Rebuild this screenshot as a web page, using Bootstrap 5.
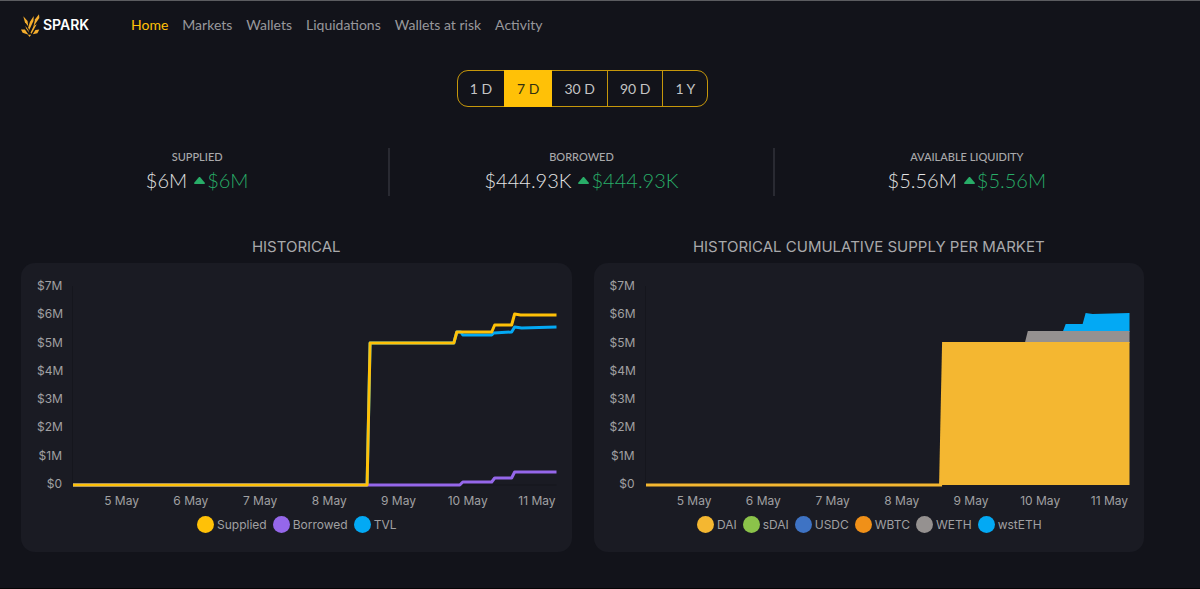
<!DOCTYPE html>
<html lang="en">
<head>
<meta charset="utf-8">
<meta name="viewport" content="width=device-width, initial-scale=1">
<title>Spark</title>
<link href="https://cdn.jsdelivr.net/npm/bootstrap@5.3.0/dist/css/bootstrap.min.css" rel="stylesheet">
<style>
  body { background: #12131a; color: #a9a9ab; font-family: Lato, sans-serif; font-size: 14px; line-height: 20px; }
  .page { border-top: 1px solid #5b5c60; border-bottom: 1px solid #050506; padding: 0 56px 0 21px; }
  .topbar { height: 48px; }
  .navbar-brand { width: 110px; margin: 0; padding: 0; color: #fff; font: 600 14px/20px Inter, sans-serif; gap: 3px; }
  .topbar .navbar-nav { gap: 14px; }
  .topbar .navbar-nav .nav-link { padding: 0; color: #98989c; }
  .topbar .navbar-nav .nav-link.active { color: #ffc107; }
  .periods { margin-top: 21px; }
  .periods .btn { --bs-btn-color: #c4c4c4; --bs-btn-border-color: #c6970b; --bs-btn-active-bg: #ffc107; --bs-btn-active-color: #33300f; --bs-btn-active-border-color: #ffc107; --bs-btn-padding-x: 12px; --bs-btn-padding-y: 7px; --bs-btn-font-size: 14px; --bs-btn-line-height: 21px; --bs-btn-border-radius: 11px; }
  .stats { --bs-gutter-x: 30px; margin-top: 41px; }
  .stat { height: 48px; }
  .stat:not(:last-child) { border-right: 2px solid #292a32; }
  .stat h2 { font-size: 11px; line-height: 18px; margin: 0; }
  .stat p { font-size: 20px; line-height: 28px; font-weight: 300; color: #e4e4e4; gap: 7px; margin: 0; }
  .stat .up { color: #28ad68; gap: 2px; }
  .charts { --bs-gutter-x: 22px; margin-top: 41px; }
  .charts h3 { font-size: 15px; line-height: 20px; font-weight: 400; margin: 0 0 6px; font-family: Inter, sans-serif; }
  .panel { background: #1a1b23; border-radius: 14px; padding: 16px 15px 19px 16px; font: 12px/14px Inter, sans-serif; color: #a0a0a2; }
  .y-axis { width: 25px; height: 212px; text-align: right; margin-right: 10px; }
  .plot { height: 198px; margin-top: 7px; border-left: 1px solid #15161d; min-width: 0; }
  .plot svg { width: 100%; height: 100%; overflow: visible; display: block; }
  .plot .series { fill: none; stroke-width: 3; stroke-linejoin: round; vector-effect: non-scaling-stroke; }
  .x-axis { margin: 3px -15px 0 50px; text-align: center; }
  .legend-row { margin: 8px 0 0; gap: 6px; padding: 0; list-style: none; }
  .legend-row li { gap: 3px; line-height: 17px; }
  .dot { width: 17px; height: 17px; }
  .foot-space { height: 36px; }
</style>
</head>
<body>
<div class="page min-vh-100">
  <nav class="topbar navbar navbar-expand p-0" aria-label="Main">
    <a class="navbar-brand d-flex align-items-center" href="#">
      <svg width="19" height="23" viewBox="62 36 58 70" aria-hidden="true">
        <g fill="#f5ae2d">
          <path d="M69 43 L82 57 L84 73 L74 61Z"/>
          <path d="M101 42 L100 57 L87 85 L84 77 L89 60Z"/>
          <path d="M117 37 L118 48 L100 74 L105 52Z"/>
          <path d="M101 72 L110 67 L94 96 L91 93Z"/>
          <path d="M62 83 L74 83 L85 99 L67 93Z"/>
          <path d="M75 72 L84 84 L87 93 L78 80Z"/>
          <path d="M118 83 L112 95 L98 98 L106 85Z"/>
          <path d="M83 99 L93 99 L88 106Z"/>
        </g>
      </svg>
      <span>SPARK</span>
    </a>
    <div class="navbar-nav">
      <a class="nav-link active" aria-current="page" href="#">Home</a>
      <a class="nav-link" href="#">Markets</a>
      <a class="nav-link" href="#">Wallets</a>
      <a class="nav-link" href="#">Liquidations</a>
      <a class="nav-link" href="#">Wallets at risk</a>
      <a class="nav-link" href="#">Activity</a>
    </div>
  </nav>

  <main>
    <div class="periods d-flex justify-content-center">
      <div class="btn-group" role="group" aria-label="Period">
        <button type="button" class="btn">1 D</button>
        <button type="button" class="btn active" aria-pressed="true">7 D</button>
        <button type="button" class="btn">30 D</button>
        <button type="button" class="btn">90 D</button>
        <button type="button" class="btn">1 Y</button>
      </div>
    </div>

    <section class="stats row text-center">
      <div class="stat col-4">
        <h2>SUPPLIED</h2>
        <p class="d-flex justify-content-center"><span>$6M</span><span class="up d-flex align-items-center"><svg width="11" height="7" viewBox="0 0 11 7" aria-hidden="true"><path fill="currentColor" d="M1 7 Q0 7 0 6 L5 0 H6 L11 6 Q11 7 10 7Z"/></svg>$6M</span></p>
      </div>
      <div class="stat col-4">
        <h2>BORROWED</h2>
        <p class="d-flex justify-content-center"><span>$444.93K</span><span class="up d-flex align-items-center"><svg width="11" height="7" viewBox="0 0 11 7" aria-hidden="true"><path fill="currentColor" d="M1 7 Q0 7 0 6 L5 0 H6 L11 6 Q11 7 10 7Z"/></svg>$444.93K</span></p>
      </div>
      <div class="stat col-4">
        <h2>AVAILABLE LIQUIDITY</h2>
        <p class="d-flex justify-content-center"><span>$5.56M</span><span class="up d-flex align-items-center"><svg width="11" height="7" viewBox="0 0 11 7" aria-hidden="true"><path fill="currentColor" d="M1 7 Q0 7 0 6 L5 0 H6 L11 6 Q11 7 10 7Z"/></svg>$5.56M</span></p>
      </div>
    </section>

    <section class="charts row">
      <div class="col-6">
        <h3 class="text-center">HISTORICAL</h3>
        <div class="panel">
          <div class="d-flex">
            <div class="y-axis d-flex flex-column justify-content-between"><span>$7M</span><span>$6M</span><span>$5M</span><span>$4M</span><span>$3M</span><span>$2M</span><span>$1M</span><span>$0</span></div>
            <div class="plot flex-grow-1">
              <svg viewBox="0 0 485 198" preserveAspectRatio="none" role="img" aria-label="Supplied, borrowed and TVL over time">
                <path d="M0 199H485" stroke="#15161d"/>
                <path class="series" stroke="#03a9f4" d="M0 199H295L298 57H382L385 46H389L391 49H420L422 47L440 46L443 41L450 42L485 41"/>
                <path class="series" stroke="#9567ea" d="M0 199H388L391 196H420L423 192H440L443 186H485"/>
                <path class="series" stroke="#ffc107" d="M0 199H295L298 57H382L385 46H420L423 39L440 39L443 28L449 29L457 29L485 29"/>
              </svg>
            </div>
          </div>
          <div class="x-axis d-flex"><span class="col">5 May</span><span class="col">6 May</span><span class="col">7 May</span><span class="col">8 May</span><span class="col">9 May</span><span class="col">10 May</span><span class="col">11 May</span></div>
          <ul class="legend-row d-flex justify-content-center">
            <li class="d-flex"><span class="dot rounded-circle" style="background:#ffc107"></span>Supplied</li>
            <li class="d-flex"><span class="dot rounded-circle" style="background:#9567ea"></span>Borrowed</li>
            <li class="d-flex"><span class="dot rounded-circle" style="background:#03a9f4"></span>TVL</li>
          </ul>
        </div>
      </div>
      <div class="col-6">
        <h3 class="text-center">HISTORICAL CUMULATIVE SUPPLY PER MARKET</h3>
        <div class="panel">
          <div class="d-flex">
            <div class="y-axis d-flex flex-column justify-content-between"><span>$7M</span><span>$6M</span><span>$5M</span><span>$4M</span><span>$3M</span><span>$2M</span><span>$1M</span><span>$0</span></div>
            <div class="plot flex-grow-1">
              <svg viewBox="0 0 485 198" preserveAspectRatio="none" role="img" aria-label="Cumulative supply per market over time">
                <path fill="#03a9f4" d="M418 46L421 38L438 38L441 27L448 28L485 27V46Z"/>
                <path fill="#959190" d="M380 57L383 45H485V57Z"/>
                <path fill="#f4b731" d="M294 199L297 56H485V199Z"/>
                <path class="series" stroke="#f4b731" d="M0 199H297"/>
              </svg>
            </div>
          </div>
          <div class="x-axis d-flex"><span class="col">5 May</span><span class="col">6 May</span><span class="col">7 May</span><span class="col">8 May</span><span class="col">9 May</span><span class="col">10 May</span><span class="col">11 May</span></div>
          <ul class="legend-row d-flex justify-content-center">
            <li class="d-flex"><span class="dot rounded-circle" style="background:#f4b731"></span>DAI</li>
            <li class="d-flex"><span class="dot rounded-circle" style="background:#8bc34a"></span>sDAI</li>
            <li class="d-flex"><span class="dot rounded-circle" style="background:#3e73c4"></span>USDC</li>
            <li class="d-flex"><span class="dot rounded-circle" style="background:#f09018"></span>WBTC</li>
            <li class="d-flex"><span class="dot rounded-circle" style="background:#959190"></span>WETH</li>
            <li class="d-flex"><span class="dot rounded-circle" style="background:#03a9f4"></span>wstETH</li>
          </ul>
        </div>
      </div>
    </section>
    <div class="foot-space"></div>
  </main>
</div>
<script src="https://cdn.jsdelivr.net/npm/bootstrap@5.3.0/dist/js/bootstrap.bundle.min.js"></script>
</body>
</html>
